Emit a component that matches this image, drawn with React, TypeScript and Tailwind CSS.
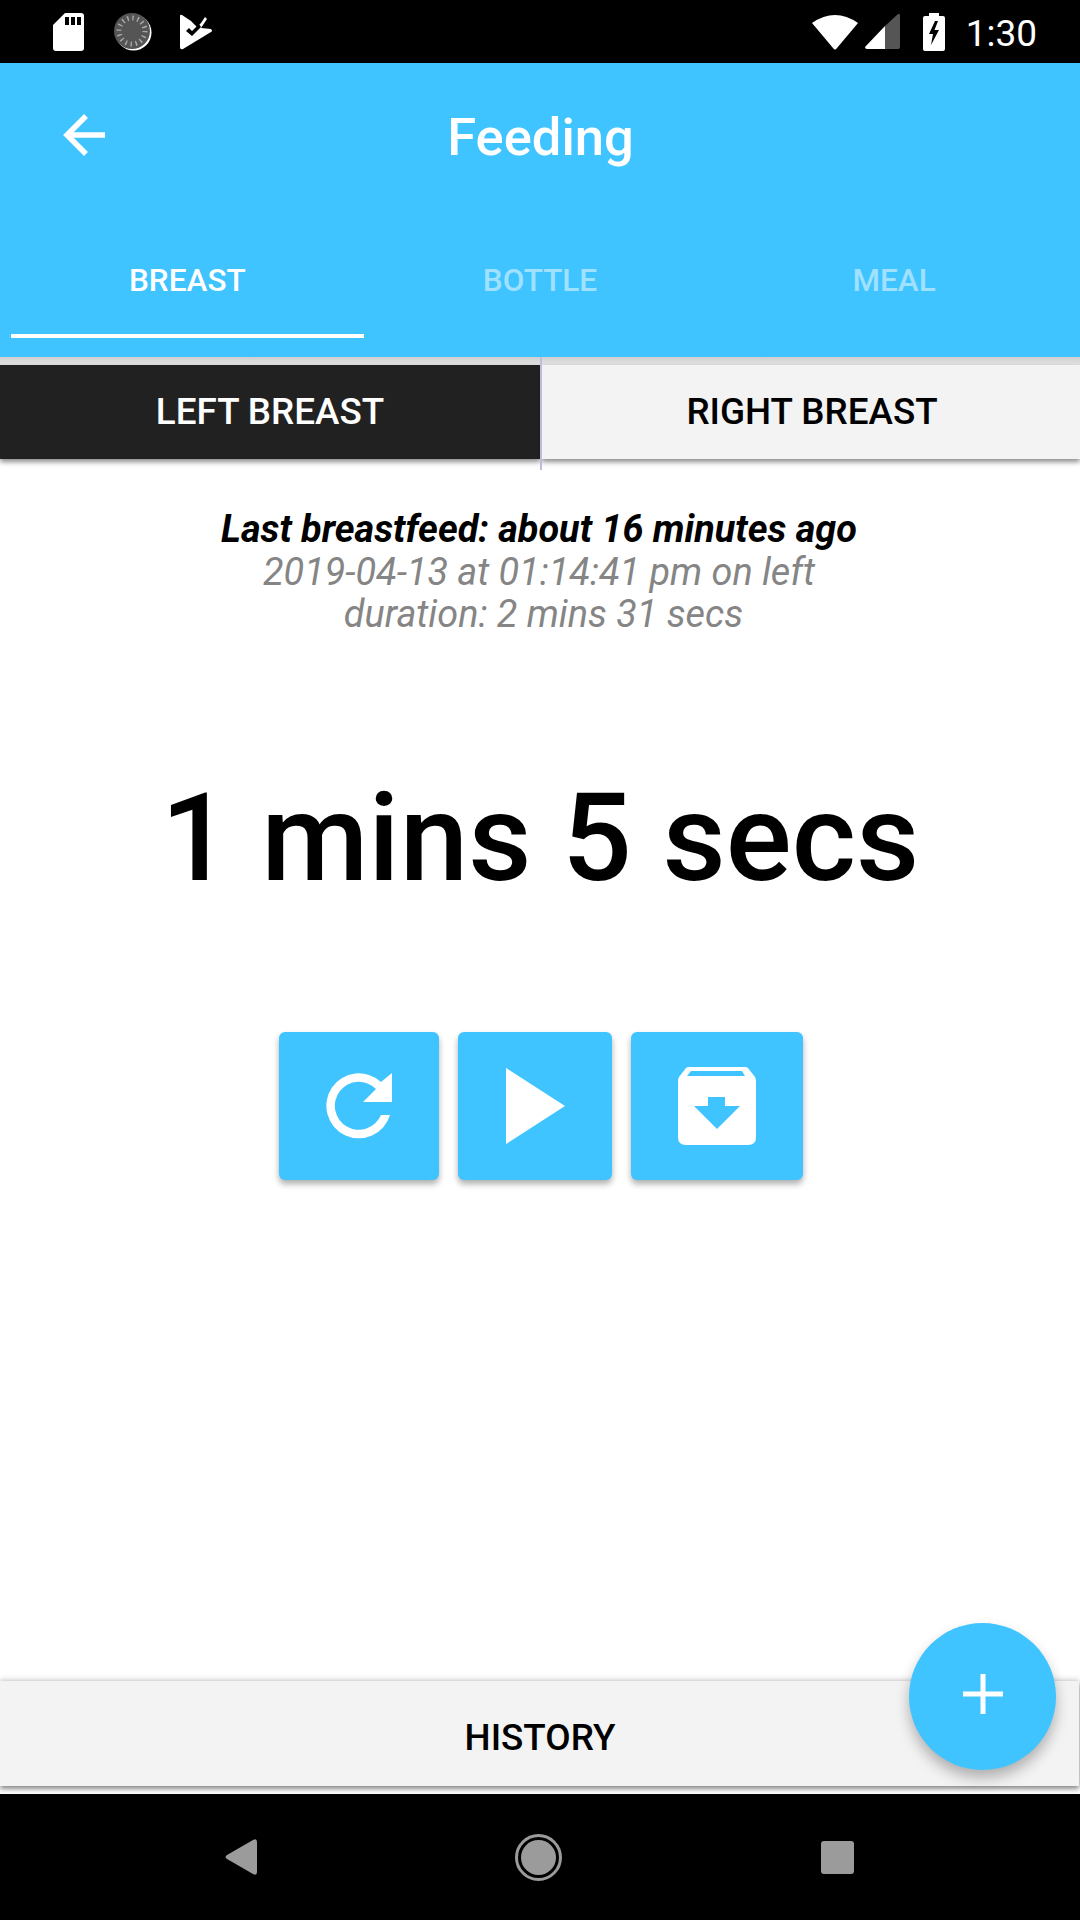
import type { ReactNode } from "react";

const roboto = "font-['Roboto',sans-serif]";

function StatusBar() {
  return (
    <div className="flex h-[63px] shrink-0 items-center bg-black pl-[53px] pr-[43px]">
      {/* sd card */}
      <svg width="32" height="38" viewBox="0 0 32 38" className="mr-[29px]">
        <path d="M12 0H28a3 3 0 0 1 3 3V35a3 3 0 0 1-3 3H3a3 3 0 0 1-3-3V12Z" fill="#fff" />
        <rect x="12" y="4" width="4" height="8" fill="#000" />
        <rect x="18" y="4" width="4" height="8" fill="#000" />
        <rect x="24" y="4" width="4" height="8" fill="#000" />
      </svg>
      {/* sync dial */}
      <svg width="38" height="38" viewBox="0 0 38 38" className="mr-[28px]">
        <circle cx="19.5" cy="19.5" r="18" fill="#fff" />
        <circle cx="18" cy="18" r="18" fill="#555" />
        <circle cx="18" cy="18" r="13" fill="none" stroke="#aaa" strokeWidth="5" strokeDasharray="1.4 3.7" />
      </svg>
      {/* tasks */}
      <svg width="33" height="36" viewBox="0 0 33 36">
        <path d="M0 2Q0 0 2 1L11 7 17 13 21 9 25 3 27 5 21 14 31 15Q33 17 31 18L3 35Q0 36 0 33Z" fill="#fff" />
        <path d="M6 17 9 14 12 17 19 10 21 13 12 22Z" fill="#000" />
      </svg>
      <div className="flex-1" />
      <svg width="46" height="36" viewBox="0 0 46 36" className="mr-[7px]">
        <path d="M0 9Q23 -7 46 9L25 34Q23 37 21 34Z" fill="#fff" />
      </svg>
      <svg width="35" height="35" viewBox="0 0 35 35" className="mr-[23px]">
        <path d="M0 33 20 12V35H2Q0 35 0 33Z" fill="#fff" />
        <path d="M20 12 33 0Q35 -1 35 2V33Q35 35 33 35H20Z" fill="#555" />
      </svg>
      <svg width="22" height="38" viewBox="0 0 22 38" className="mr-[21px]">
        <path d="M6 0H16V3H20Q22 3 22 5V36Q22 38 20 38H2Q0 38 0 36V5Q0 3 2 3H6Z" fill="#fff" />
        <path d="M12 8 6 21H10L8 32 16 17H11.5L15 8Z" fill="#000" />
      </svg>
      <span className={`${roboto} pt-[3px] text-[37px] leading-none text-white`}>1:30</span>
    </div>
  );
}

function Header() {
  return (
    <div className="relative z-20 h-[294px] shrink-0 bg-[#40c4ff] px-[11px]">
      <div className="relative flex h-[149px] items-center justify-center pb-[1px]">
        <svg width="44" height="42" viewBox="0 0 44 42" className="absolute left-[52px] top-[51px]" fill="none" stroke="#fff" strokeWidth="5.5">
          <path d="M42 21H4M23 2 4 21 23 40" />
        </svg>
        <span className={`${roboto} ml-[1px] text-[52.5px] font-medium leading-none text-white`}>Feeding</span>
      </div>
      <div className="grid grid-cols-3">
        <div className="flex h-[126px] flex-col items-center border-b-[4px] border-white pt-[53px]">
          <span className={`${roboto} text-[31.5px] font-medium leading-none text-white`}>BREAST</span>
        </div>
        <div className="flex h-[126px] flex-col items-center pt-[53px]">
          <span className={`${roboto} text-[31.5px] font-medium leading-none text-white/50`}>BOTTLE</span>
        </div>
        <div className="flex h-[126px] flex-col items-center pt-[53px]">
          <span className={`${roboto} ml-[3px] text-[31.5px] font-medium leading-none text-white/50`}>MEAL</span>
        </div>
      </div>
    </div>
  );
}

function ActionButton({ width, children }: { width: string; children: ReactNode }) {
  return (
    <div className={`${width} flex h-[148px] items-center justify-center rounded-[6px] bg-[#40c4ff] shadow-[0_4px_6px_rgba(0,0,0,0.32)]`}>
      {children}
    </div>
  );
}

export default function App() {
  return (
    <div className="relative flex h-[1920px] w-[1080px] flex-col overflow-hidden bg-white">
      <StatusBar />
      <Header />

      <div className="relative z-10 flex h-[113px] shrink-0 items-start bg-[linear-gradient(to_bottom,#cfcfcf_0px,#e4e4e4_8px,#ffffff_8px)]">
        <div className="mt-[8px] flex h-[94px] w-[540px] items-center justify-center bg-[#212121] shadow-[0_3px_5px_rgba(0,0,0,0.45)]">
          <span className={`${roboto} text-[36.8px] font-medium leading-none text-white`}>LEFT BREAST</span>
        </div>
        <div className="relative z-10 h-[113px] w-[2px] bg-[#bcbcdc]" />
        <div className="mt-[8px] flex h-[94px] flex-1 items-center justify-center bg-[#f3f3f3] shadow-[0_3px_5px_rgba(0,0,0,0.45)]">
          <span className={`${roboto} ml-[2px] text-[36.8px] font-medium leading-none text-black`}>RIGHT BREAST</span>
        </div>
      </div>

      <div className="flex flex-1 flex-col items-center">
        <div className={`${roboto} mt-[38px] flex flex-col items-center text-[37.8px] italic leading-[42px]`}>
          <p className="mr-[2px] font-bold text-black">Last breastfeed: about 16 minutes ago</p>
          <p className="mr-[2px] mt-[1px] text-[#858585]">2019-04-13 at 01:14:41 pm on left</p>
          <p className="ml-[7px] text-[#858585]">duration: 2 mins 31 secs</p>
        </div>
        <p className={`${roboto} mt-[128px] text-[123px] font-medium leading-[150px] text-black`}>1 mins 5 secs</p>
        <div className="ml-[2px] mt-[119px] flex gap-[19px]">
          <ActionButton width="w-[160px]">
            <svg width="66" height="66" viewBox="0 0 66 66">
              <path d="M66 0V29H37L50 16A24 24 0 1 0 55 42H64A32.5 32.5 0 1 1 55 9Z" fill="#fff" />
            </svg>
          </ActionButton>
          <ActionButton width="w-[154px]">
            <svg width="59" height="76" viewBox="0 0 59 76">
              <path d="M0 0 59 38 0 76Z" fill="#fff" />
            </svg>
          </ActionButton>
          <ActionButton width="w-[172px]">
            <svg width="78" height="78" viewBox="0 0 78 78">
              <path
                d="M11 0H67Q69 0 70 1L77 10Q78 12 78 14V70Q78 78 70 78H8Q0 78 0 70V14Q0 12 1 10L8 1Q9 0 11 0Z"
                fill="#fff"
              />
              <path d="M13 4H64L67 9H9Z" fill="#40c4ff" />
              <path d="M30 30H47V39H62L39 62 16 39H30Z" fill="#40c4ff" />
            </svg>
          </ActionButton>
        </div>
      </div>

      <div className="relative z-10 mb-[8px] mr-[1px] flex h-[105px] shrink-0 items-center justify-center bg-[#f3f3f3] shadow-[0_3px_5px_rgba(0,0,0,0.45),0_-2px_5px_rgba(0,0,0,0.15)]">
        <span className={`${roboto} pl-[1px] pt-[9px] text-[36.8px] font-medium leading-none text-black`}>HISTORY</span>
      </div>

      <div className="relative z-10 flex h-[126px] shrink-0 items-center bg-black">
        <svg width="32" height="36" viewBox="0 0 32 36" className="ml-[225px]">
          <path d="M2 16 28 1Q32 -1 32 3V33Q32 37 28 35L2 20Q-1 18 2 16Z" fill="#9b9b9b" />
        </svg>
        <div className="ml-[258px] flex h-[47px] w-[47px] items-center justify-center rounded-full border-[3px] border-[#9b9b9b]">
          <div className="h-[35px] w-[35px] rounded-full bg-[#9b9b9b]" />
        </div>
        <div className="ml-[259px] h-[33px] w-[33px] rounded-[3px] bg-[#9b9b9b]" />
      </div>

      {/* fab */}
      <div className="absolute left-[909px] top-[1623px] z-30 flex h-[147px] w-[147px] items-center justify-center rounded-full bg-[#40c4ff] shadow-[0_8px_14px_rgba(0,0,0,0.28)]">
        <svg width="40" height="40" viewBox="0 0 40 40" className="mb-[5px]">
          <path d="M17.5 0H22.5V17.5H40V22.5H22.5V40H17.5V22.5H0V17.5H17.5Z" fill="#fff" />
        </svg>
      </div>
    </div>
  );
}
